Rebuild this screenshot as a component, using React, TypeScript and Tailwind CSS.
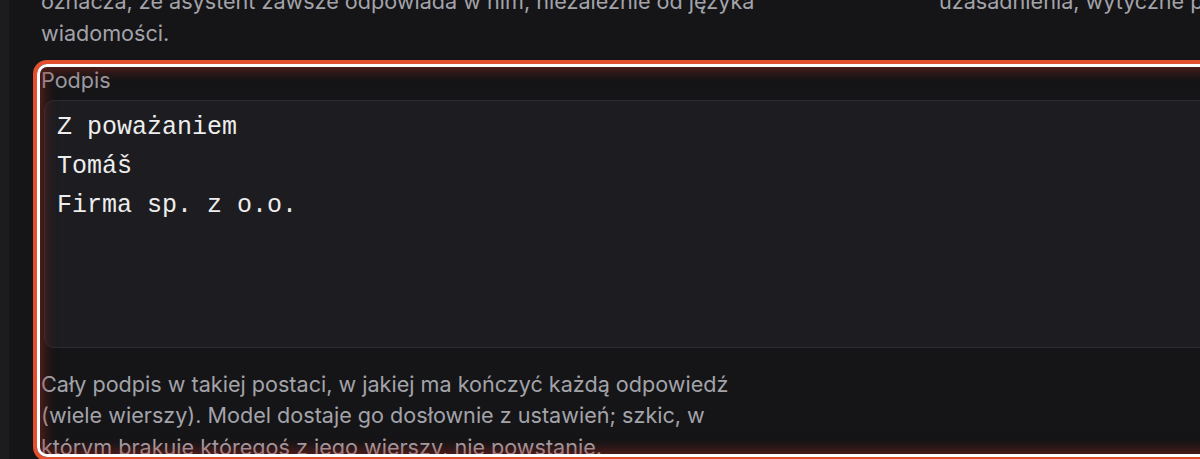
export default function App() {
  return (
    <div className="flex h-[459px] overflow-hidden bg-[#151517] font-['Inter','Noto_Sans',sans-serif]">
      <div className="w-[9px] shrink-0 bg-[#1c1c1f]" />
      <div className="-mt-[14px] w-[1780px] shrink-0 pl-[32px]">
        <div className="grid grid-cols-[800px_800px] gap-x-[98px] text-[21.6px] leading-[31.5px] text-[#a3a3aa]">
          <p>
            oznacza, że asystent zawsze odpowiada w nim, niezależnie od języka wiadomości.
          </p>
          <p>uzasadnienia, wytyczne pisania i ton odpowiedzi.</p>
        </div>

        <div className="relative mt-[16px]">
          <label className="block text-[21.6px] leading-[31.5px] text-[#9b9ba1]">Podpis</label>
          <textarea
            readOnly
            defaultValue={'Z poważaniem\nTomáš\nFirma sp. z o.o.'}
            className="mt-[3px] ml-[3px] block h-[248px] w-[1700px] resize-none overflow-hidden rounded-[10px] border-[1.5px] border-[#2c2c31] bg-[#1d1d21] px-[12px] pt-[7px] font-['Liberation_Mono',monospace] text-[25px] leading-[39px] text-[#ededed] outline-none"
          />
          <p className="mt-[21px] max-w-[712px] text-[21.6px] leading-[31.5px] text-[#a3a3aa]">
            Cały podpis w takiej postaci, w jakiej ma kończyć każdą odpowiedź (wiele wierszy). Model
            dostaje go dosłownie z ustawień; szkic, w którym brakuje któregoś z jego wierszy, nie
            powstanie.
          </p>

          <div className="pointer-events-none absolute -left-[8px] -top-[5px] -right-[10px] bottom-[2px] rounded-[14px] border-[4px] border-[#e2502f]">
            <div className="absolute inset-0 rounded-[10px] border-[3px] border-white shadow-[inset_0_0_12px_4px_rgba(160,40,30,0.5)]" />
          </div>
        </div>
      </div>
    </div>
  );
}
